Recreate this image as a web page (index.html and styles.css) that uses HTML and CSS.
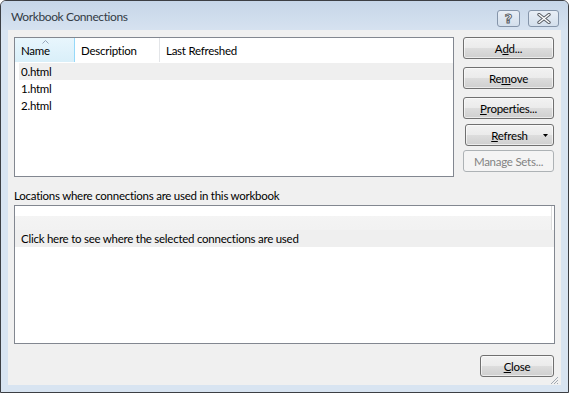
FILE: index.html
```html
<!DOCTYPE html>
<html lang="en">
<head>
    <meta charset="UTF-8">
    <title>Workbook Connections</title>
    <link rel="stylesheet" href="styles.css">
</head>
<body>
    <div class="window">
        <div class="titlebar">
            <span class="title">Workbook Connections</span>
            <div class="caption-buttons">
                <div class="cap-btn help">?</div>
                <div class="cap-btn close">
                    <svg width="14" height="11" viewBox="0 0 14 11">
                        <path d="M2 1.5 L12 9.5 M12 1.5 L2 9.5" stroke="#5a5f66" stroke-width="3.4" stroke-linecap="round"/>
                        <path d="M2 1.5 L12 9.5 M12 1.5 L2 9.5" stroke="#ffffff" stroke-width="1.4" stroke-linecap="round"/>
                    </svg>
                </div>
            </div>
        </div>

        <div class="client">
            <div class="top-area">
                <!-- connections list -->
                <div class="listbox conn-list">
                    <div class="list-header">
                        <div class="col col-name">
                            <svg class="sort-arrow" width="7" height="4" viewBox="0 0 7 4">
                                <path d="M0.5 3.5 L3.5 0.5 L6.5 3.5" fill="none" stroke="#97a7bb" stroke-width="1"/>
                            </svg>
                            Name
                        </div>
                        <div class="col col-desc">Description</div>
                        <div class="col col-last">Last Refreshed</div>
                    </div>
                    <div class="row selected">0.html</div>
                    <div class="row">1.html</div>
                    <div class="row">2.html</div>
                </div>

                <div class="side-buttons">
                    <button class="btn">A<u>d</u>d...</button>
                    <button class="btn">Re<u>m</u>ove</button>
                    <button class="btn"><u>P</u>roperties...</button>
                    <button class="btn split">
                        <span><u>R</u>efresh</span>
                        <svg class="drop" width="5" height="3" viewBox="0 0 5 3"><path d="M0 0 H5 L2.5 3 Z" fill="#000"/></svg>
                    </button>
                    <button class="btn disabled">Manage Sets...</button>
                </div>
            </div>

            <div class="locations-label">Locations where connections are used in this workbook</div>
            <div class="listbox locations">
                <div class="loc-header"></div>
                <div class="row selected wide">Click here to see where the selected connections are used</div>
            </div>

            <div class="footer">
                <button class="btn close-btn"><u>C</u>lose</button>
            </div>

            <svg class="grip" width="10" height="10" viewBox="0 0 10 10">
                <path d="M9 2 L2 9 M9 5 L5 9 M9 8 L8 9" stroke="#a0a8b2" stroke-width="1"/>
            </svg>
        </div>
    </div>
</body>
</html>
```

FILE: styles.css
```css
* {
    box-sizing: border-box;
}

body {
    margin: 0;
    font-family: Lato, "Noto Sans", sans-serif;
    font-size: 11.5px;
    letter-spacing: -0.25px;
    color: #000;
    background: #ffffff;
}

.window {
    width: 569px;
    height: 393px;
    border: 1px solid #3c3f44;
    border-radius: 6px 6px 0 0;
    background: #d8e4f1;
    padding: 0 7px 7px 7px;
    display: flex;
    flex-direction: column;
    overflow: hidden;
}

.titlebar {
    height: 29px;
    margin: 0 -7px;
    padding: 0 9px 0 10px;
    display: flex;
    align-items: center;
    justify-content: space-between;
    background: linear-gradient(#c6d6e8, #d6e2f0);
}

.title {
    font-size: 12px;
    letter-spacing: -0.4px;
    color: #333b45;
    margin-top: 1px;
}

.caption-buttons {
    display: flex;
    gap: 8px;
    margin-top: 6px;
}

.cap-btn {
    height: 17px;
    border: 1px solid #8595aa;
    border-radius: 3px;
    background: linear-gradient(#e8eef6, #d3dfec);
    display: flex;
    align-items: center;
    justify-content: center;
}

.cap-btn.help {
    width: 23px;
    font-family: "DejaVu Sans", sans-serif;
    font-weight: bold;
    font-size: 13px;
    letter-spacing: 0;
    color: #ffffff;
    -webkit-text-stroke: 1px #5a5f66;
    line-height: 1;
}

.cap-btn.close {
    width: 31px;
}

.client {
    flex: 1;
    position: relative;
    background: #f0f0f0;
    padding: 7px 6px 0 6px;
    display: flex;
    flex-direction: column;
}

.top-area {
    display: flex;
    gap: 9px;
    padding-right: 1px;
}

.listbox {
    border: 1px solid #828790;
    background: #ffffff;
}

.conn-list {
    flex: 1;
    height: 140px;
}

.list-header {
    display: flex;
    height: 24px;
    margin-bottom: 1px;
}

.col {
    display: flex;
    align-items: center;
    padding-left: 6px;
    border-right: 1px solid #e3e5e8;
    position: relative;
}

.col-name {
    width: 60px;
    padding-left: 6px;
    background: linear-gradient(#e8f6fd, #d9eff9);
    border-right: 1px solid #96d9f9;
}

.sort-arrow {
    position: absolute;
    left: 27px;
    top: 2px;
}

.col-desc {
    width: 85px;
}

.col-last {
    width: 100px;
    border-right: none;
}

.row {
    height: 17px;
    line-height: 17px;
    margin-left: 4px;
    padding-left: 2px;
}

.row.selected {
    background: #efefef;
}

.row.wide {
    margin-left: 0;
    padding-left: 6px;
}

.side-buttons {
    width: 91px;
    display: flex;
    flex-direction: column;
}

.btn {
    font-family: inherit;
    font-size: 11.5px;
    letter-spacing: -0.25px;
    height: 22px;
    padding: 0;
    border: 1px solid #707070;
    border-radius: 3px;
    background: linear-gradient(#f2f2f2 0%, #ebebeb 50%, #dddddd 51%, #cfcfcf 100%);
    color: #000;
    box-shadow: inset 0 0 0 1px rgba(255, 255, 255, 0.6);
    display: flex;
    align-items: center;
    justify-content: center;
}

.side-buttons .btn + .btn {
    margin-top: 8px;
}

.side-buttons .btn.split {
    margin-top: 5px;
    margin-left: 2px;
    position: relative;
}

.side-buttons .btn.disabled {
    margin-top: 4px;
}

.btn.split .drop {
    position: absolute;
    right: 5px;
    top: 9px;
}

.btn.disabled {
    border-color: #adb2b5;
    background: #f4f4f4;
    color: #838383;
    box-shadow: none;
}

.locations-label {
    margin-top: 11px;
    margin-bottom: 2px;
    line-height: 15px;
}

.locations {
    height: 139px;
}

.loc-header {
    height: 24px;
    margin-right: 2px;
    border-right: 1px solid #dcdcdc;
    background: linear-gradient(#ffffff 0%, #ffffff 40%, #f4f4f4 42%, #f2f2f2 100%);
}

.footer {
    display: flex;
    justify-content: flex-end;
    margin-top: 11px;
    padding-right: 1px;
}

.close-btn {
    width: 74px;
}

.grip {
    position: absolute;
    right: 2px;
    bottom: 0;
}
```
